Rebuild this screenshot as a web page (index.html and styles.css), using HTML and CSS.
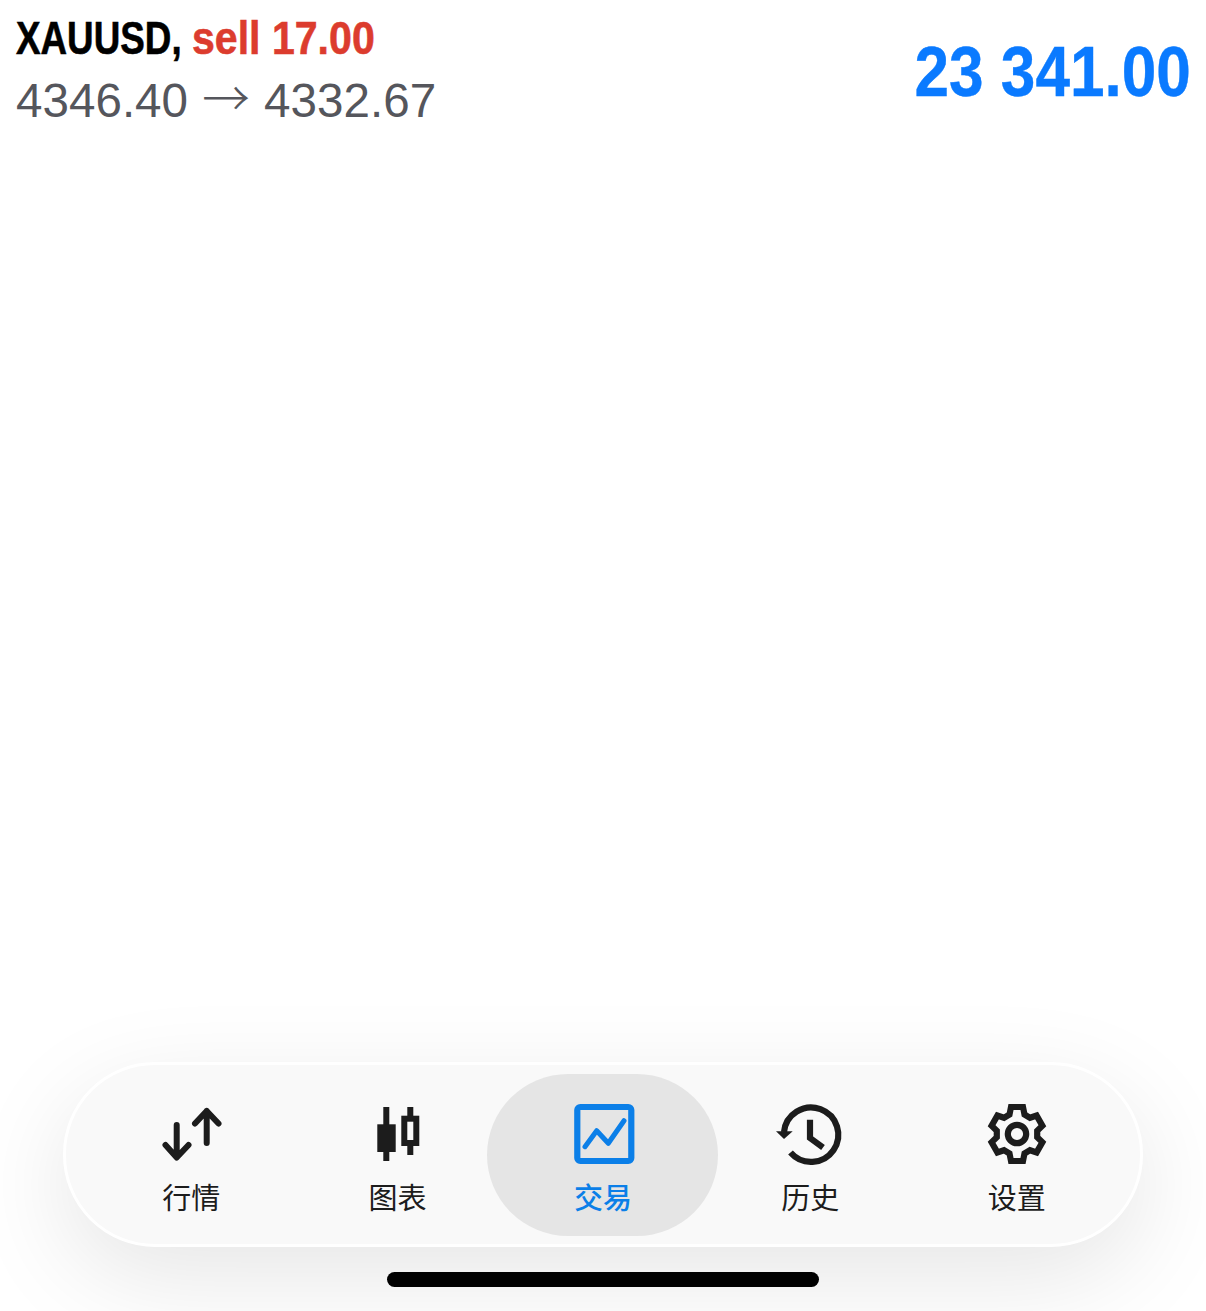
FILE: index.html
```html
<!DOCTYPE html>
<html lang="en">

<head>
  <meta charset="UTF-8">
  <title>Trade</title>
  <link rel="stylesheet" href="styles.css">
</head>

<body>
  <div id="header">
    <div id="deal">
      <div class="title"><span class="symbol">XAUUSD,</span><span class="sell">sell 17.00</span></div>
      <div class="prices">4346.40 <span class="arrow">→</span> 4332.67</div>
    </div>
    <div id="profit"><span class="amount">23 341.00</span></div>
  </div>

  <div id="content"></div>

  <div id="tabs">
    <div class="tab">
      <svg class="icon" viewBox="0 0 64 64">
        <path class="line round" d="M17.7 23V55M6.5 43L17.7 55.5L29.5 43M47.7 41V9M36 21.5L47.7 9L59.5 21.5" />
      </svg>
      <div>行情</div>
    </div>
    <div class="tab">
      <svg class="icon" viewBox="0 0 64 64">
        <rect class="solid" x="17.3" y="5" width="6" height="54" />
        <rect class="solid" x="11.3" y="22.3" width="18.4" height="27.7" />
        <rect class="solid" x="41.3" y="5" width="6" height="48" />
        <rect class="line hollow" x="38.3" y="16.7" width="12" height="24.3" />
      </svg>
      <div>图表</div>
    </div>
    <div class="tab active">
      <svg class="icon" viewBox="0 0 64 64">
        <rect class="line wide" x="6.3" y="5" width="54" height="54" rx="3" />
        <path class="line round thin" d="M14 44.7L25.7 28.7L37.3 41.3L53 18.7" />
      </svg>
      <div>交易</div>
    </div>
    <div class="tab">
      <svg class="icon" viewBox="0 0 64 64">
        <path class="line wide" d="M6 30A27.2 27.2 0 1 1 12.5 50.5" />
        <polygon class="solid" points="-2,29.3 14.7,29.3 6,37" />
        <path class="line wide" d="M32 17.7V36L45 45.5" />
      </svg>
      <div>历史</div>
    </div>
    <div class="tab">
      <svg class="icon" viewBox="0 0 64 64">
        <g transform="translate(32 32)">
          <path class="line gear" d="M-6 -27H6L7.5 -19.5L13 -16.2L19.6 -18.4L25.4 -8.3L20.2 -3.25V3.25L25.4 8.3L19.6 18.4L13 16.2L7.5 19.5L6 27H-6L-7.5 19.5L-13 16.2L-19.6 18.4L-25.4 8.3L-20.2 3.25V-3.25L-25.4 -8.3L-19.6 -18.4L-13 -16.2L-7.5 -19.5Z" />
          <circle class="line gear" r="9.2" />
        </g>
      </svg>
      <div>设置</div>
    </div>
  </div>

  <div id="home"></div>
</body>

</html>
```

FILE: styles.css
```css
html,
body {
  margin: 0;
  height: 100%;
}

body {
  height: 1311px;
  overflow: hidden;
  display: flex;
  flex-direction: column;
  background: #fff;
  font-family: "Liberation Sans", Arial, sans-serif;
}

#header {
  display: flex;
  justify-content: space-between;
  align-items: flex-start;
  padding: 10px 15px 0 16px;
}

.title {
  display: flex;
  font-size: 46px;
  line-height: 56px;
  font-weight: bold;
  color: #000;
  white-space: nowrap;
  -webkit-text-stroke: .6px currentColor;
}

.symbol {
  transform: scaleX(.8);
  transform-origin: left;
  width: 176px;
}

.sell {
  color: #dc3c2e;
  transform: scaleX(.893);
  transform-origin: left;
}

.prices {
  margin-top: 4px;
  font-size: 47.6px;
  line-height: 62px;
  color: #55565c;
  white-space: nowrap;
}

.arrow {
  margin: 0 1px;
  font-family: "Noto Sans CJK SC", sans-serif;
  font-weight: 300;
  line-height: 40px;
  position: relative;
  top: -1px;
}

#profit {
  margin-top: 22px;
  font-size: 71px;
  line-height: 80px;
  font-weight: bold;
  color: #0a7aff;
  white-space: nowrap;
  -webkit-text-stroke: .4px currentColor;
}

.amount {
  display: inline-block;
  transform: scaleX(.875);
  transform-origin: right;
}

#content {
  flex: 1;
}

#tabs {
  display: flex;
  box-sizing: border-box;
  width: 1080px;
  height: 185px;
  margin: 0 63px;
  padding: 0 22px;
  background: #f9f9f9;
  border: 3px solid #fff;
  border-radius: 92px;
  box-shadow: 0 30px 100px rgba(0, 0, 0, .1);
}

.tab {
  position: relative;
  z-index: 0;
  width: 206.4px;
  flex: none;
  display: flex;
  flex-direction: column;
  align-items: center;
  padding-top: 37px;
  font-family: "Noto Sans CJK SC", sans-serif;
  font-size: 29px;
  line-height: 40px;
  color: #1c1c1c;
}

.tab.active {
  margin: 0 1px 0 -1px;
  color: #0b7fe8;
  font-weight: 500;
}

.tab.active::before {
  content: "";
  position: absolute;
  z-index: -1;
  top: 9px;
  bottom: 8px;
  left: -13px;
  right: -12px;
  background: #e5e5e5;
  border-radius: 81px;
}

.icon {
  display: block;
  width: 64px;
  height: 64px;
  margin-bottom: 10px;
  overflow: visible;
}

.line {
  fill: none;
  stroke: currentColor;
  stroke-width: 6;
}

.round {
  stroke-linecap: round;
  stroke-linejoin: round;
}

.thin {
  stroke-width: 5;
}

.wide {
  stroke-width: 6.2;
}

.gear {
  stroke-width: 6.2;
  stroke-linejoin: miter;
}

.hollow {
  fill: #f9f9f9;
}

.solid {
  fill: currentColor;
}

#home {
  flex: none;
  align-self: center;
  width: 432px;
  height: 15px;
  margin: 25px 0 24px 0;
  border-radius: 8px;
  background: #000;
}
```
